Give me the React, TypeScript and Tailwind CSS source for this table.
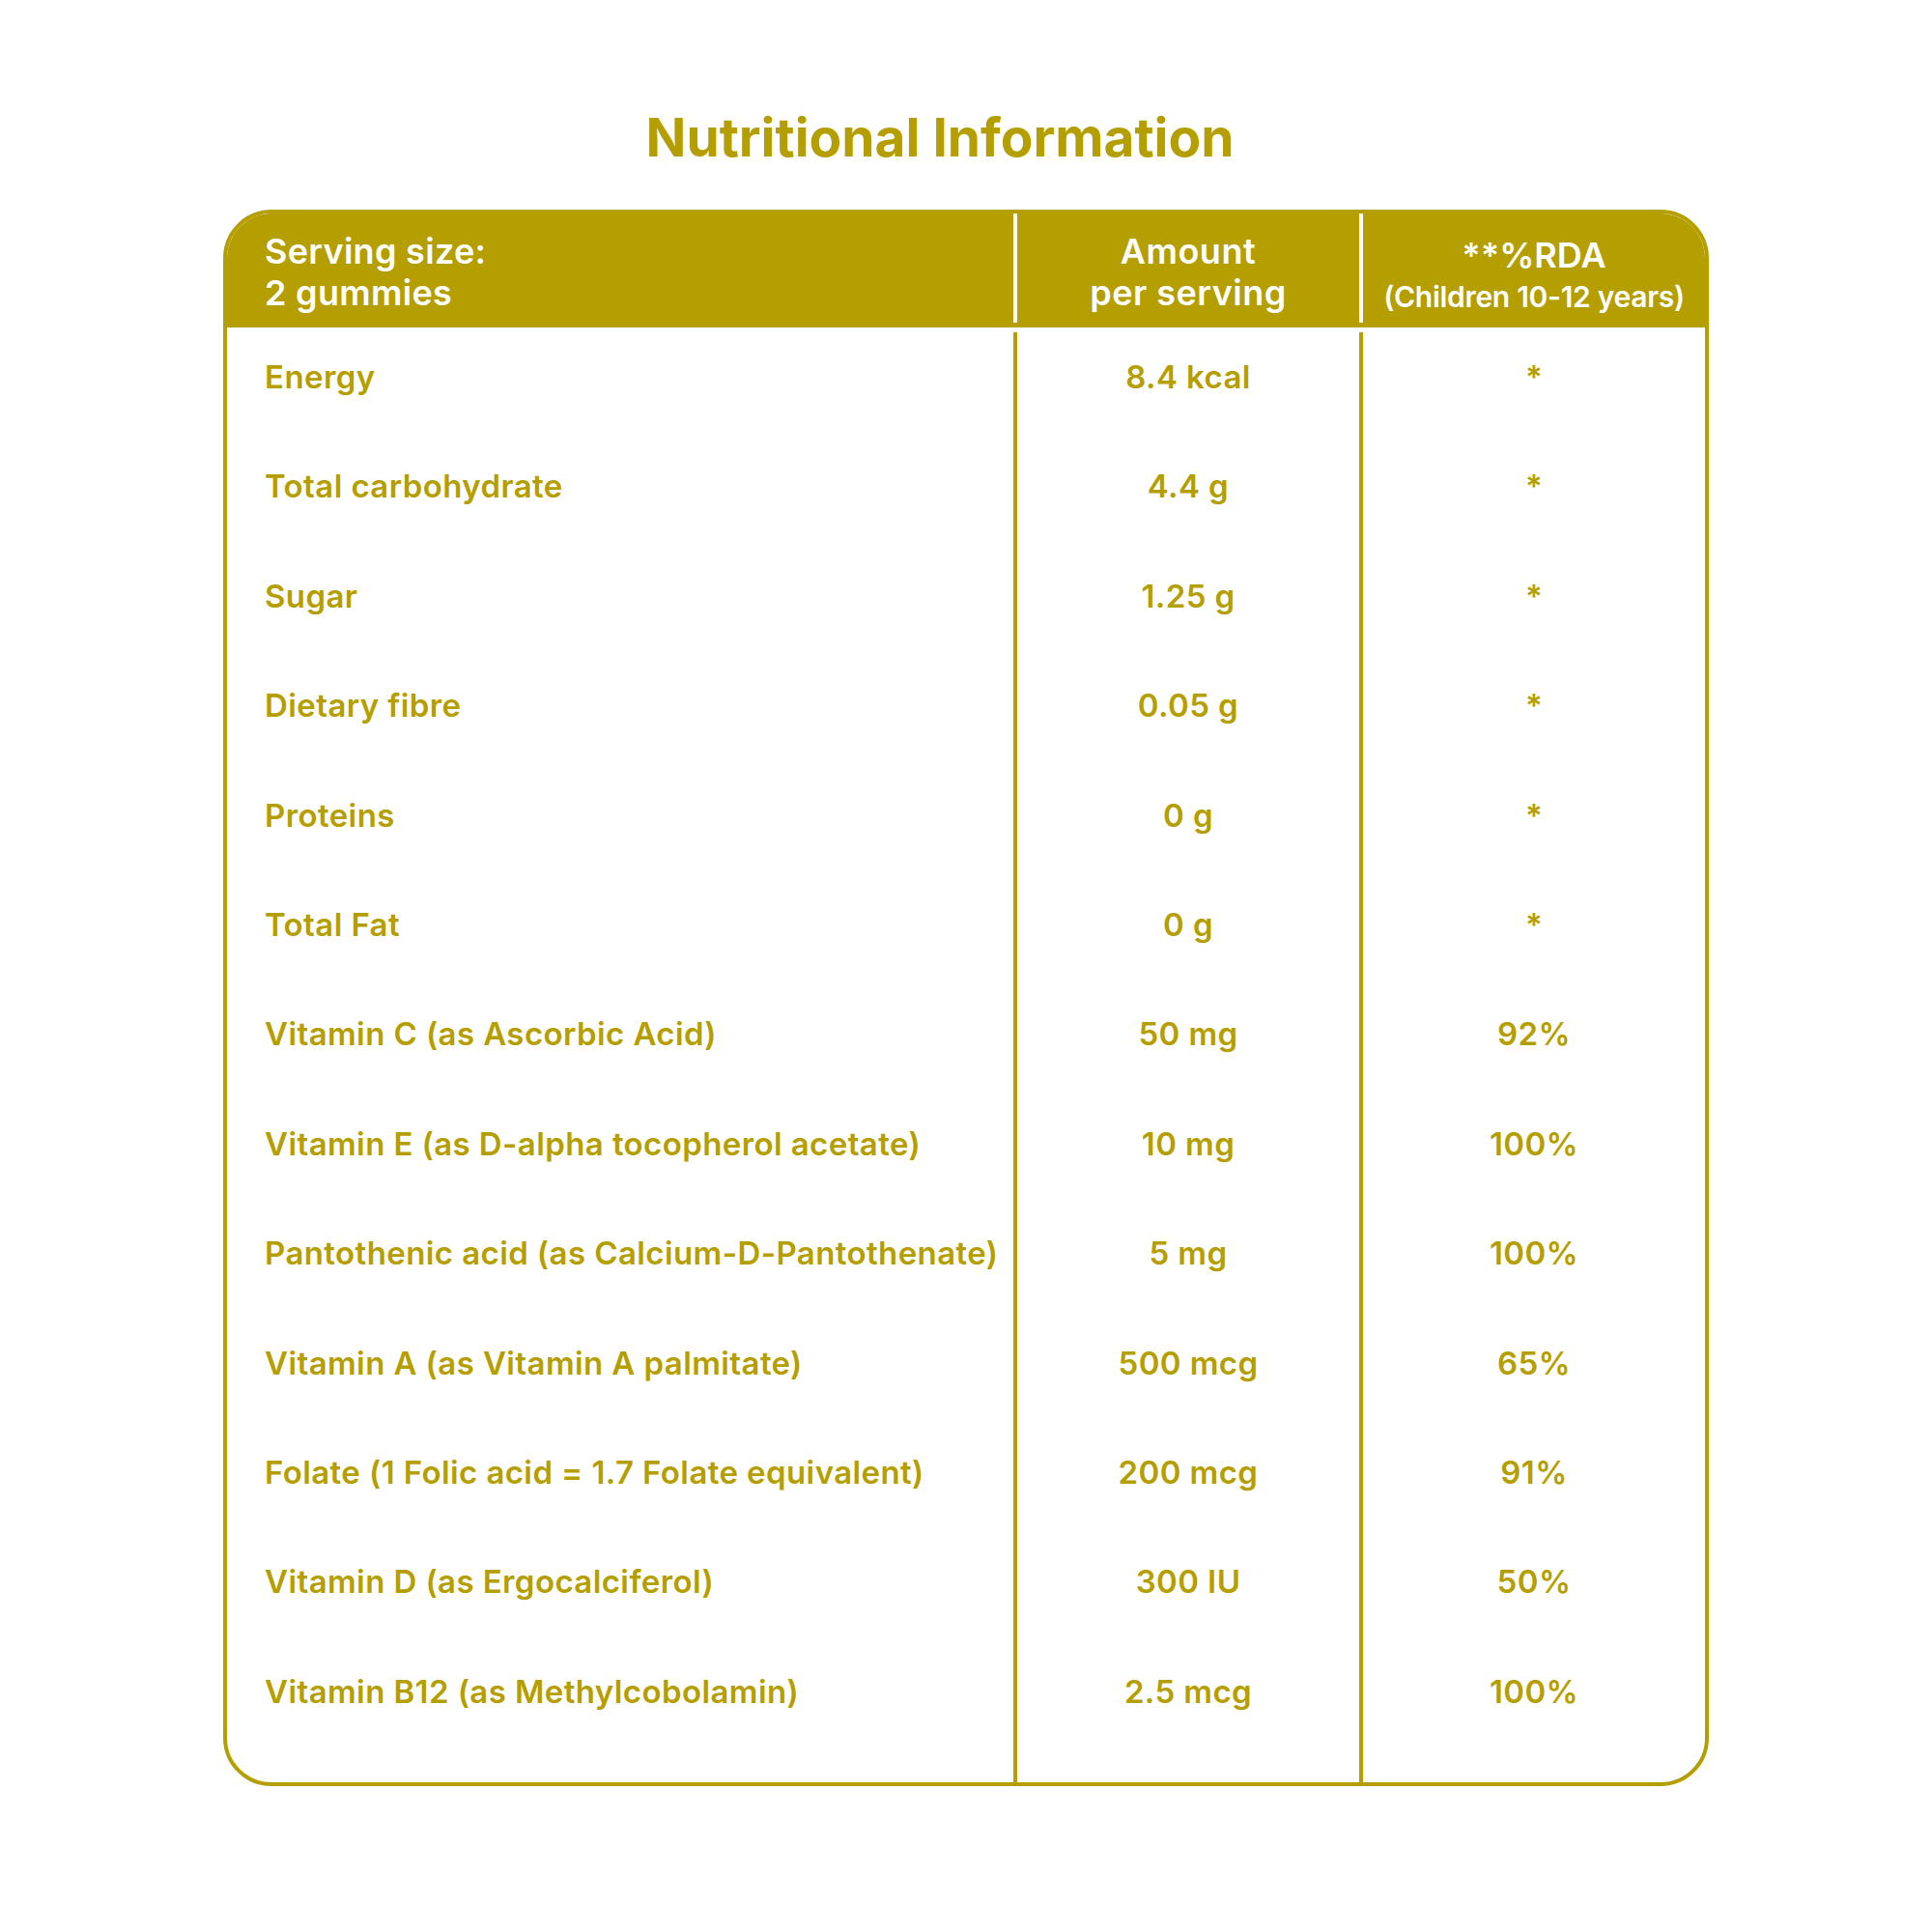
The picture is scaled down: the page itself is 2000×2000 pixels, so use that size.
const ROWS: [string, string, string][] = [
  ["Energy", "8.4 kcal", "*"],
  ["Total carbohydrate", "4.4 g", "*"],
  ["Sugar", "1.25 g", "*"],
  ["Dietary fibre", "0.05 g", "*"],
  ["Proteins", "0 g", "*"],
  ["Total Fat", "0 g", "*"],
  ["Vitamin C (as Ascorbic Acid)", "50 mg", "92%"],
  ["Vitamin E (as D-alpha tocopherol acetate)", "10 mg", "100%"],
  ["Pantothenic acid (as Calcium-D-Pantothenate)", "5 mg", "100%"],
  ["Vitamin A (as Vitamin A palmitate)", "500 mcg", "65%"],
  ["Folate (1 Folic acid = 1.7 Folate equivalent)", "200 mcg", "91%"],
  ["Vitamin D (as Ergocalciferol)", "300 IU", "50%"],
  ["Vitamin B12 (as Methylcobolamin)", "2.5 mcg", "100%"],
];

export default function App() {
  return (
    <div className="w-[2000px] h-[2000px] bg-white font-['Inter','Liberation_Sans',sans-serif] text-[#b49e00]">
      <div className="pt-[108px] pr-[54px] flex justify-center">
        <h1 className="text-[55px] leading-[68px] font-bold tracking-[0px]">Nutritional Information</h1>
      </div>

      <div className="mt-[41px] mx-auto w-[1538px] border-4 border-[#b49e00] rounded-[50px] overflow-hidden">
        {/* Header */}
        <div className="grid grid-cols-[814px_358px_358px] h-[118px] bg-[#b49e00] text-white font-semibold">
          <div className="flex flex-col justify-center pl-[39px] pt-[4px] text-[36px] leading-[43px] tracking-[0.3px]">
            <span>Serving size:</span>
            <span>2 gummies</span>
          </div>
          <div className="mb-[5px] border-l-4 border-white flex flex-col justify-center items-center pt-[9px] text-[36px] leading-[43px] tracking-[0.5px]">
            <span>Amount</span>
            <span>per serving</span>
          </div>
          <div className="mb-[5px] border-l-4 border-white flex flex-col justify-center items-center pt-[16px] whitespace-nowrap">
            <span className="text-[36px] leading-[43px]">**%RDA</span>
            <span className="text-[30px] leading-[42px] tracking-[-0.3px]">(Children 10-12 years)</span>
          </div>
        </div>

        {/* Body */}
        <div className="pt-[5px] font-semibold text-[33px] leading-[38px] tracking-[0.4px]">
          {ROWS.map(([name, amount, rda]) => (
            <div key={name} className="grid grid-cols-[814px_358px_358px] h-[113.4px]">
              <div className="pl-[39px] pt-[27px] whitespace-nowrap">{name}</div>
              <div className="border-l-4 border-[#b49e00] pt-[27px] text-center">{amount}</div>
              <div className="border-l-4 border-[#b49e00] pt-[27px] text-center">{rda}</div>
            </div>
          ))}
          <div className="grid grid-cols-[814px_358px_358px] h-[27px]">
            <div />
            <div className="border-l-4 border-[#b49e00]" />
            <div className="border-l-4 border-[#b49e00]" />
          </div>
        </div>
      </div>
    </div>
  );
}
